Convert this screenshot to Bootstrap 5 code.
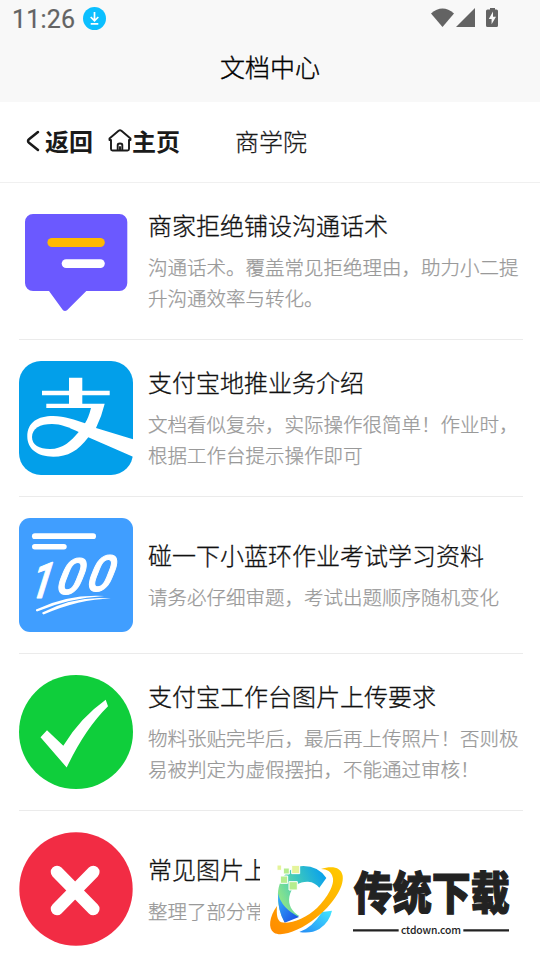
<!DOCTYPE html>
<html lang="zh-CN">
<head>
<meta charset="utf-8">
<meta name="viewport" content="width=device-width, initial-scale=1">
<title>文档中心</title>
<link href="https://cdn.jsdelivr.net/npm/bootstrap@5.3.0/dist/css/bootstrap.min.css" rel="stylesheet">
<style>
body{font-family:"Noto Sans CJK SC",sans-serif;color:#1a1a1a;height:960px;overflow:hidden;background:#fff}
svg{display:block;flex:none}
.top-area{background:#f8f8f8;height:102px}
.status-line{height:37px;padding:0 41px 0 12px}
.clock{font:400 25px/37px Roboto,sans-serif;color:#636363;-webkit-text-stroke:.2px #636363;letter-spacing:.2px;margin-right:8px;padding-top:2px}
.page-title{font-size:25px;line-height:37px;padding-top:11px;font-weight:300;-webkit-text-stroke:.35px #000;color:#000}
.crumbs{height:81px;border-bottom:1px solid #f0f0f0;padding:0 26px 3px 25px;font-size:24px;font-weight:300}
.crumbs a{color:#1a1a1a;font-weight:700}
.home-link{margin-left:15px}
.section-name{margin-left:55px;-webkit-text-stroke:.25px #1a1a1a}
.doc-list{padding:0 17px 0 19px}
.doc-row{height:157px;border-bottom:1px solid #ebebeb;gap:15px}
.doc-text{padding-bottom:2px}
.doc-title{font-size:24px;line-height:36px;font-weight:300;-webkit-text-stroke:.3px #111;margin-bottom:8px;color:#111;white-space:nowrap}
.doc-note{font-size:19.5px;line-height:31px;font-weight:300;-webkit-text-stroke:.25px #999;color:#999;white-space:nowrap}
.brand-mark{left:260px;top:850px;background:#fff}
</style>
<script src="https://cdn.jsdelivr.net/npm/bootstrap@5.3.0/dist/js/bootstrap.bundle.min.js"></script>
</head>
<body class="position-relative">
<header class="top-area">
  <div class="status-line d-flex align-items-center">
    <span class="clock">11:26</span>
    <svg width="23" height="23" viewBox="0 0 23 23"><circle cx="11.5" cy="11.5" r="11.5" fill="#0bbfff"/><path d="M11.5 5v8M7.7 10l3.8 3.8 3.8-3.8M7.7 16.8h7.6" fill="none" stroke="#fff" stroke-width="1.7"/></svg>
    <svg class="ms-auto" width="68" height="22" viewBox="0 0 68 22" fill="#636363"><path d="M0 5.500Q11.500-4.300 23 5.500L11.500 19z"/><path d="M25 19 44 0v19z"/><path d="M59 0h5v1.500h1.500Q67 1.500 67 3v14.500Q67 19 65.500 19h-9Q55 19 55 17.500V3Q55 1.500 56.500 1.500H59z"/><path d="M62 3.500 57.800 11h2.800v5.200L65 8.700h-3z" fill="#f8f8f8"/></svg>
  </div>
  <h1 class="page-title text-center mb-0">文档中心</h1>
</header>
<nav class="crumbs d-flex align-items-center">
  <a class="d-flex align-items-center text-decoration-none" href="#"><svg width="20" height="22" viewBox="0 0 20 22"><path d="M13 2 4 9.300Q2 11 4 12.700L13 20" fill="none" stroke="#1a1a1a" stroke-width="2.500" stroke-linecap="round"/></svg>返回</a>
  <a class="home-link d-flex align-items-center text-decoration-none" href="#"><svg width="24" height="23" viewBox="0 0 24 23" fill="none" stroke="#1a1a1a" stroke-width="1.900" stroke-linejoin="round" stroke-linecap="round"><path d="M1.500 9.500 10.600 1.800Q12 .8 13.400 1.800L22.500 9.500V11H21v9q0 1.500-1.500 1.500h-15Q3 21.500 3 20v-9H1.500zM9.700 21v-5q0-1.500 2.300-1.500t2.300 1.500v5M12 18v3"/></svg>主页</a>
  <span class="section-name">商学院</span>
</nav>
<main class="doc-list">
  <div class="doc-row d-flex align-items-center">
    <svg width="114" height="114" viewBox="0 0 114 114"><path d="M14 10h86.300a8 8 0 0 1 8 8v61a8 8 0 0 1-8 8H67.300L48 106.200q-2 1.600-4 0L30 87H14a8 8 0 0 1-8-8V18a8 8 0 0 1 8-8z" fill="#6b59ff"/><rect x="28.400" y="34" width="57.400" height="9" rx="4.500" fill="#ffb900"/><rect x="42.700" y="55.200" width="43.100" height="8.800" rx="4.400" fill="#fff"/></svg>
    <div class="doc-text"><h2 class="doc-title">商家拒绝铺设沟通话术</h2><p class="doc-note mb-0">沟通话术。覆盖常见拒绝理由，助力小二提<br>升沟通效率与转化。</p></div>
  </div>
  <div class="doc-row d-flex align-items-center">
    <svg width="114" height="114" viewBox="0 0 114 114"><rect width="114" height="114" rx="22" fill="#029fea"/><g fill="#fff"><path d="M50 16.700h13.300v13H90.700v4.600H63.300v8.400h22.400Q82.500 56 77 67L114 78.300v17.400L69.300 76.300C59 90 49 95.700 34.300 95.700 18 95.700 8.300 87.500 8.300 75.500 8.300 61 19 55 34 55c12 0 22 4 32 7.300Q69.500 57 72 47H27.300v-4.300H50v-8.400H23v-4.600h27z"/></g><path d="M59.700 71C49 66 42 63 33 63 21 63 13 67.500 13 76c0 8 7 12 18 12 13 0 21-8 28.700-17z" fill="#029fea"/></svg>
    <div class="doc-text"><h2 class="doc-title">支付宝地推业务介绍</h2><p class="doc-note mb-0">文档看似复杂，实际操作很简单！作业时，<br>根据工作台提示操作即可</p></div>
  </div>
  <div class="doc-row d-flex align-items-center">
    <svg width="114" height="114" viewBox="0 0 114 114"><rect width="114" height="114" rx="11" fill="#409eff"/><g fill="#fff"><rect x="13" y="15.300" width="64" height="5.700" rx="2.850"/><rect x="13" y="26" width="34.700" height="5.500" rx="2.750"/><g font-family="Roboto,sans-serif" font-style="italic" font-weight="500" font-size="50" stroke="#fff" stroke-width="1" stroke-linejoin="round"><text transform="translate(10 79.500) skewX(-10) scale(.8 1)">1</text><text transform="translate(35.500 75.500) skewX(-14) scale(.95 1)">0</text><text transform="translate(66 72.500) skewX(-14) scale(.95 1)">0</text></g><path d="M17 91.500Q49 76 85.300 78 50 80 18 93.500q-1.500-.5-1-2zM23.300 94.500Q58 77 92 80.700 60 81 24.500 96.500q-1.500-.5-1.200-2z"/></g></svg>
    <div class="doc-text"><h2 class="doc-title">碰一下小蓝环作业考试学习资料</h2><p class="doc-note mb-0">请务必仔细审题，考试出题顺序随机变化</p></div>
  </div>
  <div class="doc-row d-flex align-items-center">
    <svg width="114" height="114" viewBox="0 0 114 114"><circle cx="57" cy="57" r="57" fill="#0fce3b"/><path d="M21.500 62.300 28 55.300 44.300 70.700Q61 43 86.700 24.700L89 31.300Q66 54 47.700 92.500z" fill="#fff"/></svg>
    <div class="doc-text"><h2 class="doc-title">支付宝工作台图片上传要求</h2><p class="doc-note mb-0">物料张贴完毕后，最后再上传照片！否则极<br>易被判定为虚假摆拍，不能通过审核！</p></div>
  </div>
  <div class="doc-row d-flex align-items-center">
    <svg width="114" height="114" viewBox="0 0 114 114"><circle cx="57" cy="57" r="56.700" fill="#f22c44"/><path d="M38 40 74.300 77M74.300 40 38 77" stroke="#fff" stroke-width="12.500" stroke-linecap="round"/></svg>
    <div class="doc-text"><h2 class="doc-title">常见图片上</h2><p class="doc-note mb-0">整理了部分常</p></div>
  </div>
</main>
<div class="brand-mark position-absolute">
  <svg width="280" height="110" viewBox="15 15 840 330">
    <defs>
      <linearGradient id="ringFill" x1="0" y1="1" x2="1" y2="0"><stop offset="0" stop-color="#ff8a00"/><stop offset="1" stop-color="#ffcb00"/></linearGradient>
      <linearGradient id="crescent" x1="0" y1=".7" x2="1" y2=".2"><stop offset="0" stop-color="#9bea80"/><stop offset=".5" stop-color="#3dc8bd"/><stop offset="1" stop-color="#08a0ee"/></linearGradient>
      <linearGradient id="deepBlue" x1="0" y1="0" x2="1" y2="1"><stop offset="0" stop-color="#36b4ff"/><stop offset="1" stop-color="#1745df"/></linearGradient>
      <linearGradient id="lowerArc" x1="0" y1="1" x2="1" y2="0"><stop offset="0" stop-color="#258bf5"/><stop offset="1" stop-color="#42e6ff"/></linearGradient>
    </defs>
    <path d="M214 99Q190 63 145 63C100 65 67 103 69 155q0 42 20 76l44-18C110 200 99 178 103 155c6-35 34-46 56-45 15 1 26 8 34 18z" fill="url(#crescent)"/>
    <path d="M69 145q10 45 63 71l-43 17Q67 195 69 145z" fill="url(#deepBlue)"/>
    <path d="M231 197q-8 35-38 55-25 15-60 9 38-12 68-60z" fill="url(#lowerArc)"/>
    <path d="M198 72c30-10 60-8 65 20 5 38-34 89-78 125-48 40-105 60-128 46-19-12-14-48 9-80-2 24 0 43 13 49 24 7 76-13 107-43 32-31 54-72 47-92-3-17-17-25-35-25z" fill="url(#ringFill)"/>
    <g stroke="#fff" stroke-width="3"><path d="M110 61h24v25h-24zM66 60h14v16H66z" fill="#e5f49a"/><path d="M85 69h18v18H85zM76 93h22v22H76zM102 110h25v25h-25z" fill="#b5ed8e"/></g>
    <text transform="translate(296 195) scale(1 1.150)" font-family="Noto Sans CJK SC,sans-serif" font-weight="900" font-size="118" textLength="468" lengthAdjust="spacingAndGlyphs" fill="#222" stroke="#222" stroke-width="3">传统下载</text>
    <path d="M294 256h137M625 256h137" stroke="#222" stroke-width="7"/>
    <text x="438" y="267" font-family="Noto Sans CJK SC,sans-serif" font-weight="500" font-size="31" textLength="180" fill="#222">ctdown.com</text>
  </svg>
</div>
</body>
</html>
